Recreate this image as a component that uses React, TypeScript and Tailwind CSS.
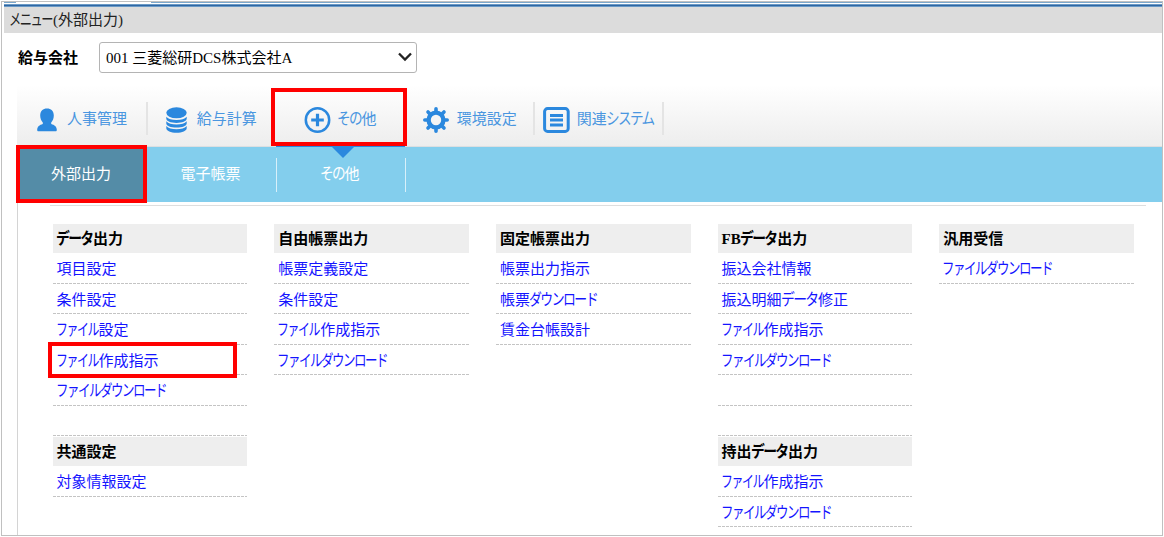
import { Fragment, ReactNode } from "react";
import clsx from "clsx";

// widths of the condensed kana runs, in px at 15px type
const kanaWidths: Record<string, number> = {
  "ファイル": 42,
  "ファイルダウンロード": 110,
  "ダウンロード": 68,
  "データ": 36.5,
  "システム": 48,
  "その": 24,
  "メニュー": 43,
};

function Label({ text }: { text: string }) {
  const parts = text.split(/([\u3040-\u30ff]+)/);
  return (
    <span className="inline-flex whitespace-pre">
      {parts.map((part, i) => {
        if (i % 2 === 0) return <Fragment key={i}>{part && <span>{part}</span>}</Fragment>;
        const width = kanaWidths[part] ?? part.length * 12;
        return (
          <span key={i} className="inline-block" style={{ width }}>
            <span
              className="-ml-[0.8px] inline-block origin-left tracking-[-1.8px]"
              style={{ transform: `scale(${width / (part.length * 13.2)}, 1.08)` }}
            >
              {part}
            </span>
          </span>
        );
      })}
    </span>
  );
}

function UserIcon() {
  return (
    <svg width="20" height="24" viewBox="0 0 20 24" fill="currentColor">
      <path d="M10 .5c4 0 6.800 2.500 6.800 7 0 3-1 5.300-2.600 7v1.400c3.200.900 5.600 2.600 5.600 5.800 0 1-.4 1.500-1.300 1.500h-17C.6 23.200.200 22.700.200 21.700c0-3.200 2.400-4.900 5.600-5.800v-1.400c-1.600-1.700-2.600-4-2.600-7C3.200 3 6 .5 10 .5z" />
    </svg>
  );
}

function DatabaseIcon() {
  return (
    <svg width="21" height="26" viewBox="0 0 21 26">
      <ellipse cx="10.500" cy="5.800" rx="10.200" ry="5.500" fill="currentColor" />
      <g fill="currentColor">
        <path d="M.3 9.700c2 2.300 5.500 3.300 10.200 3.300s8.200-1 10.200-3.300v2.100c0 2.300-4.500 4.200-10.200 4.200S.3 14.100.3 11.800z" />
        <path d="M.3 14.300c2 2.300 5.500 3.300 10.200 3.300s8.200-1 10.200-3.300v2.100c0 2.300-4.500 4.200-10.200 4.200S.3 18.700.3 16.400z" />
        <path d="M.3 18.900c2 2.300 5.500 3.300 10.200 3.300s8.200-1 10.200-3.300v2.300c0 2.500-4.500 4.500-10.200 4.500S.3 23.700.3 21.200z" />
      </g>
    </svg>
  );
}

function PlusIcon() {
  return (
    <svg width="27" height="26" viewBox="0 0 27 26" fill="none" stroke="currentColor">
      <circle cx="13.500" cy="13" r="11.700" strokeWidth="2.500" />
      <path d="M13.500 6.800v12.400M7.200 13h12.600" strokeWidth="3.200" />
    </svg>
  );
}

function GearIcon() {
  return (
    <svg width="26" height="26" viewBox="0 0 26 26" fill="none" stroke="currentColor">
      <circle cx="13" cy="13" r="7.400" strokeWidth="4.400" />
      <path
        d="M13 1.800v3M13 21.200v3M1.800 13h3M21.200 13h3M5 5l2.200 2.200M18.800 18.800L21 21M5 21l2.200-2.200M18.800 7.200L21 5"
        strokeWidth="3.600"
        strokeLinecap="round"
      />
    </svg>
  );
}

function ListIcon() {
  return (
    <svg width="27" height="26" viewBox="0 0 27 26" fill="none" stroke="currentColor">
      <rect x="1.600" y="1.600" width="23.600" height="22.800" rx="3" strokeWidth="3" />
      <path d="M7 8.500h13M7 13h13M7 18h13" strokeWidth="2.900" />
    </svg>
  );
}

const tabs: { label: string; icon: ReactNode; gap: string }[] = [
  { label: "人事管理", icon: <UserIcon />, gap: "gap-2.5" },
  { label: "給与計算", icon: <DatabaseIcon />, gap: "gap-2.5" },
  { label: "その他", icon: <PlusIcon />, gap: "gap-1.5" },
  { label: "環境設定", icon: <GearIcon />, gap: "gap-2" },
  { label: "関連システム", icon: <ListIcon />, gap: "gap-[7px]" },
];

type Group = { title: string; items: string[] };

const columns: Group[][] = [
  [
    { title: "データ出力", items: ["項目設定", "条件設定", "ファイル設定", "ファイル作成指示", "ファイルダウンロード", ""] },
    { title: "共通設定", items: ["対象情報設定"] },
  ],
  [{ title: "自由帳票出力", items: ["帳票定義設定", "条件設定", "ファイル作成指示", "ファイルダウンロード"] }],
  [{ title: "固定帳票出力", items: ["帳票出力指示", "帳票ダウンロード", "賃金台帳設計"] }],
  [
    { title: "FBデータ出力", items: ["振込会社情報", "振込明細データ修正", "ファイル作成指示", "ファイルダウンロード", "", ""] },
    { title: "持出データ出力", items: ["ファイル作成指示", "ファイルダウンロード"] },
  ],
  [{ title: "汎用受信", items: ["ファイルダウンロード"] }],
];

function MenuGroup({ title, items }: Group) {
  return (
    <section className="mb-px">
      <h2 className="flex h-[29px] items-center bg-[#eeeeee] pt-px pl-1 font-bold text-black">
        <Label text={title} />
      </h2>
      <ul>
        {items.map((item, i) => (
          <li key={i} className="flex h-[30.5px] flex-col">
            <a href="#" className="flex flex-1 items-center pt-[2.500px] pl-1 text-[#1414ff]">
              {item && <Label text={item} />}
            </a>
            <svg className="block h-px w-full" shapeRendering="crispEdges">
              <line x1="0" y1="0.5" x2="100%" y2="0.5" stroke="#c4c4c4" strokeDasharray="3 1" />
            </svg>
          </li>
        ))}
      </ul>
    </section>
  );
}

export default function App() {
  return (
    <div className="relative h-[537px] w-[1164px] overflow-hidden bg-white p-px font-['Liberation_Serif','Noto_Sans_CJK_JP',sans-serif] text-[15px] leading-5">
      <div className="flex h-[535px] w-[1162px] flex-col overflow-hidden border border-[#c0c0c0] pl-0.5">
        <div className="flex h-px shrink-0">
          <div className="w-3 bg-[#7ba7cc]" />
          <div className="ml-[135px] flex-1 bg-[#7ba7cc]" />
        </div>
        <div className="mt-px h-[3px] shrink-0 border-y border-[#6a9ac6] bg-[#2f66a3]" />
        <header className="flex h-[26px] shrink-0 items-center bg-[#dcdcdc] pl-[6px] text-[#222]">
          <Label text="メニュー(外部出力)" />
        </header>

        <div className="flex h-[52px] shrink-0 items-center pl-3.5">
          <span className="mb-0.5 w-[81px] font-bold text-black">給与会社</span>
          <button className="mb-1 flex h-[31px] w-[318px] items-center justify-between rounded-[3px] border border-[#b4b4b4] bg-white pr-1 pl-1.5 text-black">
            <span className="pt-0.5 whitespace-pre">001 三菱総研DCS株式会社A</span>
            <svg width="14" height="10" viewBox="0 0 14 10" fill="none" stroke="#222" strokeWidth="2.300">
              <path d="M1 1.500l6 6 6-6" />
            </svg>
          </button>
        </div>

        <div className="ml-[13px] flex flex-1 flex-col">
          <nav className="flex h-[62px] items-center border-b border-[#dcdfe1] bg-linear-to-b from-white to-[#ededed] pt-1.5 pl-[1.500px]">
            {tabs.map((tab, i) => (
              <a
                key={tab.label}
                href="#"
                className={clsx(
                  "flex h-[33px] w-[129.200px] items-center justify-center border-r-2 text-[#4a96e0]",
                  tab.gap,
                  i === 1 || i === 2 ? "border-transparent" : "border-[#e4e4e4]"
                )}
              >
                <span className="mt-0.5 text-[#2b88de]">{tab.icon}</span>
                <Label text={tab.label} />
              </a>
            ))}
          </nav>

          <nav className="relative flex h-[55px] items-center bg-[#83ceed] text-white">
            <div className="absolute -top-px left-[259px] h-px w-[129px] bg-[#2b88de]" />
            <svg className="absolute top-0 left-[315px]" width="22" height="11" viewBox="0 0 22 11">
              <path d="M0 0h22L11 11z" fill="#2b88de" />
            </svg>
            <a href="#" className="flex h-full w-[130px] items-center justify-center bg-[#548ca7] pr-0.5 pb-px">
              外部出力
            </a>
            <a href="#" className="flex h-[34px] w-[130px] items-center justify-center border-r border-[#d8f0fa] pr-0.5 pb-px">
              電子帳票
            </a>
            <a href="#" className="flex h-[34px] w-[129px] items-center justify-center border-r border-[#d8f0fa] pr-0.5 pb-px">
              <Label text="その他" />
            </a>
          </nav>

          <main className="flex-1 border-l border-[#d4d4d4] pt-[3px]">
            <div className="mr-4 ml-8 border-t border-[#dedede]" />
            <div className="mt-[18px] ml-[34.500px] flex gap-[27px]">
              {columns.map((groups, i) => (
                <div key={i} className="w-[194.700px]">
                  {groups.map((group) => (
                    <MenuGroup key={group.title} {...group} />
                  ))}
                </div>
              ))}
            </div>
          </main>
        </div>
      </div>

      {/* highlight frames over the steps to click */}
      <div className="absolute top-[88px] left-[271px] h-[58px] w-[136px] border-4 border-[#ff0000]" />
      <div className="absolute top-[145px] left-4 h-[58px] w-[131px] border-4 border-[#ff0000]" />
      <div className="absolute top-[342px] left-12 h-9 w-[189px] border-4 border-[#ff0000]" />
    </div>
  );
}
